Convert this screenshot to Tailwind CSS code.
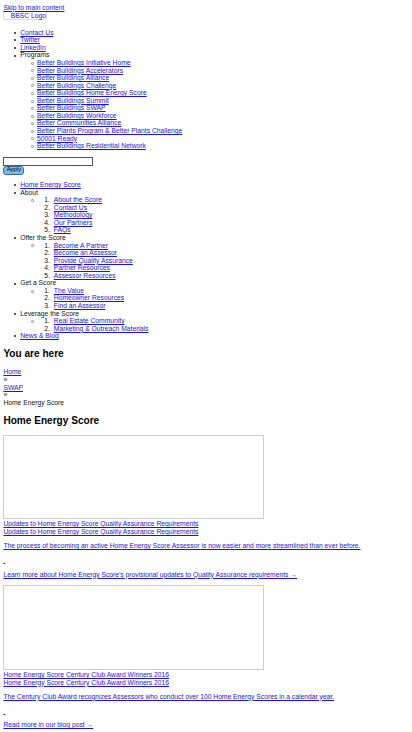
<!DOCTYPE html>
<html lang="en">
<head>
<meta charset="utf-8">
<title>Home Energy Score</title>
<script src="https://cdn.jsdelivr.net/npm/@tailwindcss/browser@4"></script>
</head>
<body class="h-[732px] overflow-hidden bg-white pl-[3.4px] pt-[3.6px] font-['Liberation_Sans',Arial,sans-serif] text-[6.74px] leading-[7.56px] text-[#111] [&_a]:text-[#1a12e8] [&_a]:underline [&_li]:relative [&_li]:before:absolute [&_.disc>li]:before:top-[3.2px] [&_.disc>li]:before:left-[-6.2px] [&_.disc>li]:before:size-[2px] [&_.disc>li]:before:rounded-full [&_.disc>li]:before:bg-[#222] [&_.circ>li]:before:top-[2.8px] [&_.circ>li]:before:left-[-6.4px] [&_.circ>li]:before:size-[3px] [&_.circ>li]:before:rounded-full [&_.circ>li]:before:border [&_.circ>li]:before:border-[#888] [&_ol]:[counter-reset:n] [&_ol>li]:[counter-increment:n] [&_ol>li]:before:left-[-9.6px] [&_ol>li]:before:content-[counter(n)_'.']">
<a href="#" class="block w-fit">Skip to main content</a>
<a href="#" class="flex h-[9.2px] w-[44px] items-center justify-center border border-[#ddd] pl-[6px] whitespace-nowrap !no-underline">BBSC Logo</a>

<ul class="disc mt-[8.4px] pl-[16.8px]">
  <li><a href="#">Contact Us</a></li>
  <li><a href="#">Twitter</a></li>
  <li><a href="#">LinkedIn</a></li>
  <li>Programs
    <ul class="circ pl-[16.8px]">
      <li><a href="#">Better Buildings Initiative Home</a></li>
      <li><a href="#">Better Buildings Accelerators</a></li>
      <li><a href="#">Better Buildings Alliance</a></li>
      <li><a href="#">Better Buildings Challenge</a></li>
      <li><a href="#">Better Buildings Home Energy Score</a></li>
      <li><a href="#">Better Buildings Summit</a></li>
      <li><a href="#">Better Buildings SWAP</a></li>
      <li><a href="#">Better Buildings Workforce</a></li>
      <li><a href="#">Better Communities Alliance</a></li>
      <li><a href="#">Better Plants Program &amp; Better Plants Challenge</a></li>
      <li><a href="#">50001 Ready</a></li>
      <li><a href="#">Better Buildings Residential Network</a></li>
    </ul>
  </li>
</ul>

<form class="mt-[6.8px] h-[18px]">
  <input type="text" aria-label="Search" class="block h-[9px] w-[90px] border border-[#555] bg-white">
  <button type="button" class="flex h-[9px] w-[21px] items-center justify-center rounded-[3px] border border-[#3c6c96] bg-[#7abaf0] text-[5.8px] leading-none text-black">Apply</button>
</form>

<ul class="disc mt-[6.5px] pl-[16.8px]">
  <li><a href="#">Home Energy Score</a></li>
  <li>About
    <ul class="circ pl-[16.8px]"><li>
      <ol class="pl-[16.8px]">
        <li><a href="#">About the Score</a></li>
        <li><a href="#">Contact Us</a></li>
        <li><a href="#">Methodology</a></li>
        <li><a href="#">Our Partners</a></li>
        <li><a href="#">FAQs</a></li>
      </ol></li></ul>
  </li>
  <li>Offer the Score
    <ul class="circ pl-[16.8px]"><li>
      <ol class="pl-[16.8px]">
        <li><a href="#">Become A Partner</a></li>
        <li><a href="#">Become an Assessor</a></li>
        <li><a href="#">Provide Quality Assurance</a></li>
        <li><a href="#">Partner Resources</a></li>
        <li><a href="#">Assessor Resources</a></li>
      </ol></li></ul>
  </li>
  <li>Get a Score
    <ul class="circ pl-[16.8px]"><li>
      <ol class="pl-[16.8px]">
        <li><a href="#">The Value</a></li>
        <li><a href="#">Homeowner Resources</a></li>
        <li><a href="#">Find an Assessor</a></li>
      </ol></li></ul>
  </li>
  <li>Leverage the Score
    <ul class="circ pl-[16.8px]"><li>
      <ol class="pl-[16.8px]">
        <li><a href="#">Real Estate Community</a></li>
        <li><a href="#">Marketing &amp; Outreach Materials</a></li>
      </ol></li></ul>
  </li>
  <li><a href="#">News &amp; Blog</a></li>
</ul>

<h2 class="mt-[8.6px] text-[10.08px] leading-[11.6px] font-bold text-black">You are here</h2>
<div class="mt-[8.4px]">
  <div><a href="#">Home</a></div>
  <div>»</div>
  <div><a href="#">SWAP</a></div>
  <div>»</div>
  <div>Home Energy Score</div>
</div>
<h2 class="mt-[8.6px] text-[10.08px] leading-[11.6px] font-bold text-black">Home Energy Score</h2>

<article class="mt-[8.4px]">
  <div class="h-[84.4px] w-[261px] border border-[#ccc]"></div>
  <div class="mt-[1.2px]"><a href="#">Updates to Home Energy Score Quality Assurance Requirements</a></div>
  <div><a href="#">Updates to Home Energy Score Quality Assurance Requirements</a></div>
  <p class="mt-[6.7px]"><a href="#">The process of becoming an active Home Energy Score Assessor is now easier and more streamlined than ever before.</a></p>
  <p class="mt-[6.7px]"><a href="#">&nbsp;</a></p>
  <p class="mt-[6.7px]"><a href="#">Learn more about Home Energy Score's provisional updates to Quality Assurance requirements →</a></p>
</article>
<article class="mt-[7.2px]">
  <div class="h-[84.4px] w-[261px] border border-[#ccc]"></div>
  <div class="mt-[1.2px]"><a href="#">Home Energy Score Century Club Award Winners 2016</a></div>
  <div><a href="#">Home Energy Score Century Club Award Winners 2016</a></div>
  <p class="mt-[6.7px]"><a href="#">The Century Club Award recognizes Assessors who conduct over 100 Home Energy Scores in a calendar year.</a></p>
  <p class="mt-[6.7px]"><a href="#">&nbsp;</a></p>
  <p class="mt-[6.7px]"><a href="#">Read more in our blog post →</a></p>
</article>
</body>
</html>
